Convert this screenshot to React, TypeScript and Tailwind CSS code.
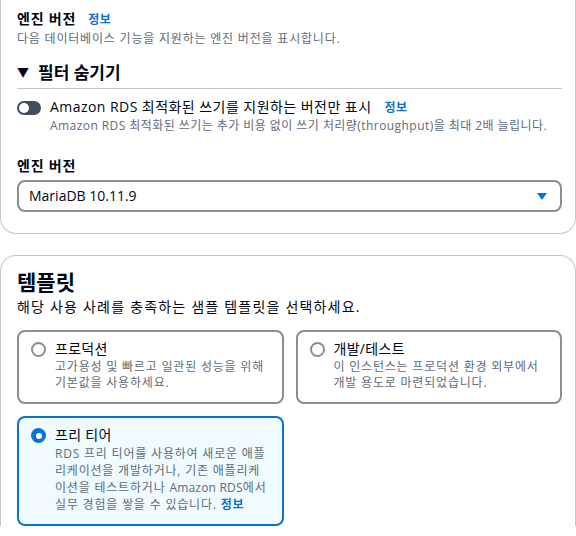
import React from "react";

const Radio = ({ checked }: { checked?: boolean }) =>
  checked ? (
    <span className="mt-[3px] flex h-[15px] w-[15px] shrink-0 items-center justify-center rounded-full bg-[#0972d3]">
      <span className="h-[6px] w-[6px] rounded-full bg-white" />
    </span>
  ) : (
    <span className="mt-[3px] h-[15px] w-[15px] shrink-0 rounded-full border-2 border-[#8c8c94] bg-white" />
  );

interface CardProps {
  title: string;
  lines: React.ReactNode;
  checked?: boolean;
}

const TemplateCard: React.FC<CardProps> = ({ title, lines, checked }) => (
  <div
    className={`flex gap-[9px] rounded-lg border-2 px-[12px] pb-[11px] pt-[7px] ${
      checked ? "border-[#0972d3] bg-[#f0fbff]" : "border-[#8c8c94] bg-white"
    }`}
  >
    <Radio checked={checked} />
    <div className="flex min-w-0 flex-col">
      <span className="text-[14px] leading-[20px] tracking-[0.3px] text-[#000716]">{title}</span>
      <span
        className={`whitespace-nowrap text-[12px] tracking-[0.8px] text-[#5f6b7a] ${
          checked ? "leading-[17px]" : "leading-[16px]"
        }`}
      >
        {lines}
      </span>
    </div>
  </div>
);

export default function App() {
  return (
    <div
      className="h-[536px] w-[576px] overflow-hidden bg-white"
      style={{ fontFamily: '"Open Sans", "Noto Sans CJK KR", sans-serif' }}
    >
      <div className="rounded-b-2xl border border-t-0 border-[#c6c6cd] pb-[21px] pl-[16px] pr-[13px] pt-[9px]">
        <div className="flex items-baseline gap-[12px]">
          <span className="text-[14px] font-bold leading-[20px] tracking-[0.8px] text-[#000716]">엔진 버전</span>
          <span className="text-[12px] font-bold leading-[20px] tracking-[0.5px] text-[#0972d3]">정보</span>
        </div>
        <p className="text-[12px] leading-[18px] tracking-[0.8px] text-[#5f6b7a]">
          다음 데이터베이스 기능을 지원하는 엔진 버전을 표시합니다.
        </p>

        <div className="mt-[14px] flex items-center gap-[9px] border-b border-[#c6c6cd] pb-[4px]">
          <span className="text-[12px] leading-[22px] text-[#000716]">▼</span>
          <span className="text-[17px] font-bold leading-[22px] text-[#000716]">필터 숨기기</span>
        </div>

        <div className="mt-[8px] flex gap-[9px]">
          <span className="mt-[4px] flex h-[14px] w-[24px] shrink-0 items-center rounded-full bg-[#414d5c] px-[2px]">
            <span className="h-[10px] w-[10px] rounded-full bg-white" />
          </span>
          <div className="flex flex-col">
            <div className="flex items-baseline gap-[13px]">
              <span className="text-[14px] leading-[20px] tracking-[0.45px] text-[#000716]">
                Amazon RDS 최적화된 쓰기를 지원하는 버전만 표시
              </span>
              <span className="text-[12px] font-bold leading-[20px] tracking-[0.5px] text-[#0972d3]">정보</span>
            </div>
            <span className="text-[12px] leading-[16px] tracking-[0.44px] text-[#5f6b7a]">
              Amazon RDS 최적화된 쓰기는 추가 비용 없이 쓰기 처리량(throughput)을 최대 2배 늘립니다.
            </span>
          </div>
        </div>

        <div className="mt-[22px] text-[14px] font-bold leading-[20px] tracking-[0.8px] text-[#000716]">엔진 버전</div>
        <div className="mt-[4px] flex h-[32px] items-center justify-between rounded-lg border-2 border-[#8c8c94] bg-white pl-[10px] pr-[12px]">
          <span className="text-[14px] leading-[20px] text-[#000716]">MariaDB 10.11.9</span>
          <svg width="12" height="9" viewBox="0 0 12 9">
            <path d="M1 1h10L6 8z" fill="#0972d3" />
          </svg>
        </div>
      </div>

      <div className="mt-[21px] rounded-t-2xl border border-b-0 border-[#c6c6cd] pl-[16px] pr-[13px] pt-[12px]">
        <h2 className="text-[21px] font-bold leading-[28px] text-[#000716]">템플릿</h2>
        <p className="mt-[1px] text-[14px] leading-[20px] tracking-[1.2px] text-[#000716]">
          해당 사용 사례를 충족하는 샘플 템플릿을 선택하세요.
        </p>

        <div className="mt-[13px] grid grid-cols-2 gap-x-[12px] gap-y-[12px]">
          <TemplateCard
            title="프로덕션"
            lines={
              <>
                고가용성 및 빠르고 일관된 성능을 위해
                <br />
                기본값을 사용하세요.
              </>
            }
          />
          <TemplateCard
            title="개발/테스트"
            lines={
              <>
                이 인스턴스는 프로덕션 환경 외부에서
                <br />
                개발 용도로 마련되었습니다.
              </>
            }
          />
          <TemplateCard
            checked
            title="프리 티어"
            lines={
              <>
                RDS 프리 티어를 사용하여 새로운 애플
                <br />
                리케이션을 개발하거나, 기존 애플리케
                <br />
                이션을 테스트하거나 <span className="tracking-[0.2px]">Amazon RDS</span>에서
                <br />
                실무 경험을 쌓을 수 있습니다.{" "}
                <span className="font-bold text-[#0972d3]">정보</span>
              </>
            }
          />
        </div>
      </div>
    </div>
  );
}
